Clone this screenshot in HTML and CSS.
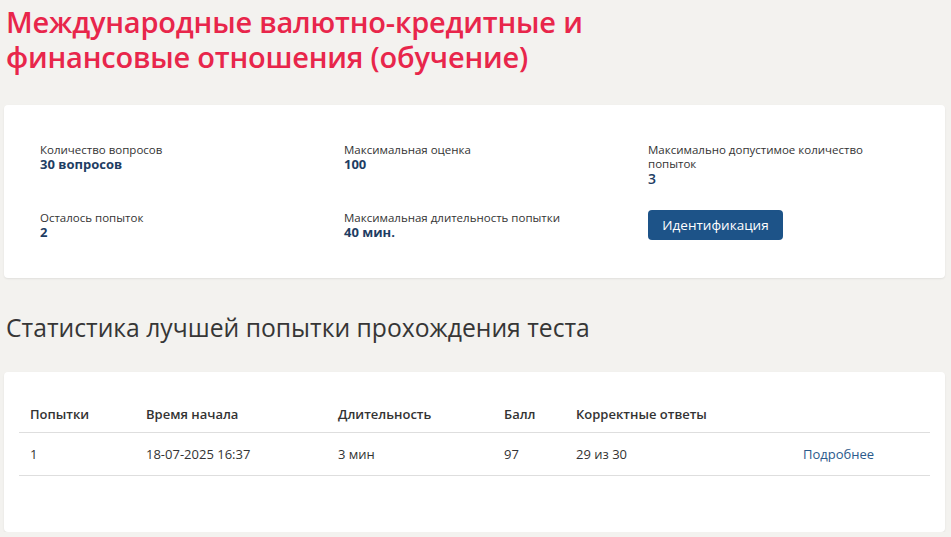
FILE: index.html
```html
<!DOCTYPE html>
<html lang="ru">
<head>
<meta charset="utf-8">
<title>Тест</title>
<link rel="stylesheet" href="styles.css">
</head>
<body>
<div class="page">
  <h1 class="title">Международные валютно-кредитные и финансовые отношения (обучение)</h1>
  <div class="card info">
    <div class="info-grid">
      <div class="item">
        <div class="label">Количество вопросов</div>
        <div class="value">30 вопросов</div>
      </div>
      <div class="item">
        <div class="label">Максимальная оценка</div>
        <div class="value">100</div>
      </div>
      <div class="item">
        <div class="label">Максимально допустимое количество попыток</div>
        <div class="value plain">3</div>
      </div>
      <div class="item">
        <div class="label">Осталось попыток</div>
        <div class="value">2</div>
      </div>
      <div class="item">
        <div class="label">Максимальная длительность попытки</div>
        <div class="value">40 мин.</div>
      </div>
      <div class="item">
        <button class="btn">Идентификация</button>
      </div>
    </div>
  </div>
  <h2 class="subtitle">Статистика лучшей попытки прохождения теста</h2>
  <div class="card stats">
    <table class="table">
      <colgroup>
        <col class="c1"><col class="c2"><col class="c3"><col class="c4"><col class="c5"><col class="c6">
      </colgroup>
      <thead>
        <tr><th>Попытки</th><th>Время начала</th><th>Длительность</th><th>Балл</th><th>Корректные ответы</th><th></th></tr>
      </thead>
      <tbody>
        <tr><td>1</td><td>18-07-2025 16:37</td><td>3 мин</td><td>97</td><td>29 из 30</td><td><a class="link" href="#">Подробнее</a></td></tr>
      </tbody>
    </table>
  </div>
</div>
</body>
</html>
```

FILE: styles.css
```css
* { box-sizing: border-box; }
html, body { margin: 0; padding: 0; }
body {
  background: #f3f2ef;
  font-family: "Open Sans", "Noto Sans", sans-serif;
  color: #333;
}
.page {
  padding: 4px 6px 0 4px;
}
.title {
  margin: 0 0 31px 2px;
  font-family: "Open Sans", sans-serif;
  font-weight: 600;
  font-size: 29px;
  line-height: 35px;
  color: #e8264b;
  max-width: 620px;
  letter-spacing: -0.2px;
}
.card {
  background: #fff;
  border-radius: 4px;
  box-shadow: 0 1px 2px rgba(0,0,0,0.08);
}
.info {
  padding: 38px 36px 38px 36px;
}
.info-grid {
  display: grid;
  grid-template-columns: repeat(3, 1fr);
  column-gap: 43px;
  row-gap: 25px;
}
.label {
  font-size: 11.5px;
  line-height: 14px;
  color: #333;
}
.value {
  font-size: 13px;
  line-height: 15px;
  font-weight: 700;
  color: #1e3d63;
}
.value.plain {
  font-weight: 600;
  font-size: 14px;
  color: #1e3d63;
}
.btn {
  display: block;
  width: 135px;
  height: 30px;
  margin-top: -1px;
  border: 0;
  border-radius: 4px;
  background: #1d5388;
  color: #fff;
  font-family: "Open Sans", sans-serif;
  font-size: 13.5px;
  font-weight: 400;
  cursor: pointer;
}
.subtitle {
  margin: 34px 0 28px 2px;
  font-weight: 400;
  font-size: 24.7px;
  line-height: 32px;
  color: #363636;
}
.stats {
  padding: 24px 15px 56px 15px;
}
.table {
  width: 100%;
  border-collapse: collapse;
  table-layout: fixed;
  font-size: 13px;
}
.c1 { width: 116px; }
.c2 { width: 192px; }
.c3 { width: 166px; }
.c4 { width: 72px; }
.c5 { width: 227px; }
.table th {
  text-align: left;
  font-weight: 600;
  padding: 9px 11px;
  height: 36px;
  border-bottom: 1px solid #dedede;
}
.table td {
  text-align: left;
  padding: 9px 11px;
  height: 43px;
  border-bottom: 1px solid #dedede;
}
.link {
  color: #2b5a8c;
  text-decoration: none;
}
```
